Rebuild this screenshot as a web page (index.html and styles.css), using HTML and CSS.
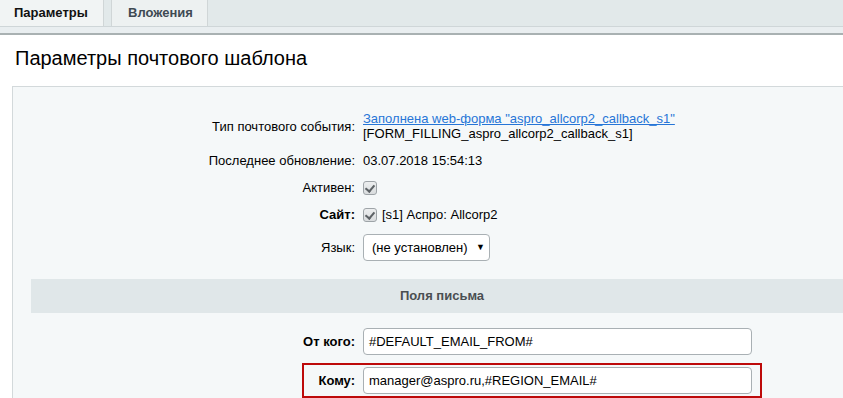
FILE: index.html
```html
<!DOCTYPE html>
<html lang="ru">
<head>
  <meta charset="UTF-8">
  <title>Параметры почтового шаблона</title>
  <link rel="stylesheet" href="styles.css">
</head>
<body>
  <!-- вкладки -->
  <div class="tabs">
    <div class="tab active">Параметры</div>
    <div class="tab">Вложения</div>
  </div>
  <div class="tabs-line"></div>

  <div class="page">
    <h1 class="title">Параметры почтового шаблона</h1>

    <div class="panel">
      <div class="row row-first">
        <div class="label">Тип почтового события:</div>
        <div class="value">
          <a href="#">Заполнена web-форма "aspro_allcorp2_callback_s1"</a><br>
          [FORM_FILLING_aspro_allcorp2_callback_s1]
        </div>
      </div>
      <div class="row">
        <div class="label">Последнее обновление:</div>
        <div class="value">03.07.2018 15:54:13</div>
      </div>
      <div class="row">
        <div class="label">Активен:</div>
        <div class="value"><span class="check"></span></div>
      </div>
      <div class="row">
        <div class="label req">Сайт:</div>
        <div class="value"><span class="check"></span>[s1] Аспро: Allcorp2</div>
      </div>
      <div class="row">
        <div class="label">Язык:</div>
        <div class="value">
          <div class="select">(не установлен)<span class="arrow">▼</span></div>
        </div>
      </div>

      <div class="section">Поля письма</div>

      <div class="row row-from">
        <div class="label req">От кого:</div>
        <div class="value"><div class="input">#DEFAULT_EMAIL_FROM#</div></div>
      </div>
      <div class="row row-to">
        <div class="label req">Кому:</div>
        <div class="value"><div class="input">manager@aspro.ru,#REGION_EMAIL#</div></div>
        <div class="highlight"></div>
      </div>
    </div>
  </div>
</body>
</html>
```

FILE: styles.css
```css
/* общие */
body {
  margin: 0;
  font-family: "Liberation Sans", Arial, sans-serif;
  font-size: 13px;
  color: #000;
  background: #fff;
  overflow: hidden;
}

/* вкладки */
.tabs {
  display: flex;
  height: 26px;
  background: #e2e9ea;
  border-bottom: 1px solid #cfd6d8;
}
.tab {
  box-sizing: border-box;
  height: 26px;
  line-height: 26px;
  font-weight: bold;
  color: #3f4a53;
  background: #edf1f1;
  border-left: 1px solid #d0d6d7;
  border-right: 1px solid #d0d6d7;
  padding: 0 16px;
  width: 97px;
  margin-left: 7px;
}
.tab.active {
  width: 104px;
  margin-left: 0;
  border-left: 0;
  padding-left: 14px;
  color: #111;
  background: #f1f4f4;
}
.tabs-line {
  height: 6px;
  background: #e9eef0;
  border-bottom: 2px solid #a9b1b2;
}

/* заголовок */
.title {
  margin: 11px 0 16px 15px;
  font-size: 20px;
  line-height: 24px;
  font-weight: normal;
}

/* панель */
.panel {
  margin-left: 12px;
  background: #f5f8f9;
  border-top: 1px solid #d3d9db;
  border-left: 1px solid #d3d9db;
  padding: 18px 0 0 18px;
  height: 400px;
}
.row {
  display: flex;
  align-items: center;
  padding: 6px 0;
  line-height: 15px;
  position: relative;
}
.label {
  box-sizing: border-box;
  width: 332px;
  flex: none;
  padding-right: 8px;
  text-align: right;
}
.label.req { font-weight: bold; }
.value { flex: 1; display: flex; align-items: center; }
.row-first .value { display: block; }
.value a { color: #2675d7; }

.check {
  box-sizing: border-box;
  width: 14px;
  height: 14px;
  margin-right: 5px;
  border: 1px solid #9ea4a8;
  border-radius: 3px;
  background: linear-gradient(#eceeef, #d9dcde);
  position: relative;
}
.check::after {
  content: "";
  position: absolute;
  left: 3px;
  top: 1px;
  width: 4px;
  height: 7px;
  border: solid #5d6266;
  border-width: 0 2px 2px 0;
  transform: rotate(40deg);
}

.select {
  box-sizing: border-box;
  width: 127px;
  height: 27px;
  line-height: 25px;
  border: 1px solid #a9b0b4;
  border-radius: 4px;
  background: #fff;
  padding-left: 8px;
  position: relative;
}
.select .arrow {
  position: absolute;
  right: 4px;
  top: 0;
  font-size: 9px;
}

.section {
  margin-top: 12px;
  margin-right: -10px;
  height: 34px;
  line-height: 34px;
  background: #e0e7e9;
  text-align: center;
  font-weight: bold;
  color: #4a4f52;
}

.row-from { padding-top: 15px; }
.input {
  box-sizing: border-box;
  width: 389px;
  height: 27px;
  line-height: 25px;
  border: 1px solid #a9b0b4;
  border-radius: 4px;
  background: #fff;
  padding-left: 5px;
}
.highlight {
  position: absolute;
  left: 271px;
  top: 2px;
  width: 460px;
  height: 35px;
  box-sizing: border-box;
  border: 2px solid #bd0a0a;
}
```
